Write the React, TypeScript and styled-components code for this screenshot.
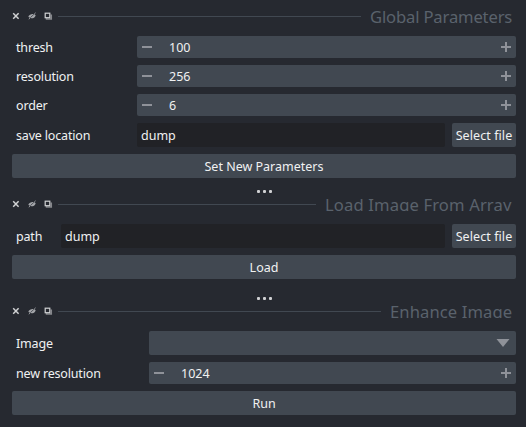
import React from 'react';
import styled, { createGlobalStyle } from 'styled-components';

const GlobalStyle = createGlobalStyle`
  * { box-sizing: border-box; }
  html, body { margin: 0; background: #262930; }
  body { overflow: hidden; }
`;

const Window = styled.div`
  width: 526px;
  height: 427px;
  padding: 9px 10px 0 12px;
  background: #262930;
  color: #f0f1f2;
  font: 12.5px/20px 'Noto Sans', sans-serif;
`;

const TitleBar = styled.header`
  display: flex;
  align-items: center;
  height: 14px;
  margin-bottom: 13px;
  overflow: hidden;
`;

const TitleIcons = styled.svg`
  flex: none;
  width: 46px;
  height: 14px;
`;

const Rule = styled.div`
  flex: 1;
  height: 1px;
  margin-top: 1px;
  background: #414851;
`;

const Title = styled.h2<{ $width: number; $tracking: number }>`
  flex: none;
  width: ${(p) => p.$width}px;
  margin: 0 4px 0 9px;
  height: 14px;
  padding-top: 1px;
  color: #5a626c;
  font-size: 16.6px;
  font-weight: 400;
  line-height: 14px;
  letter-spacing: ${(p) => p.$tracking}px;
  white-space: nowrap;
`;

const Form = styled.div`
  display: grid;
  gap: 7px;
`;

const Row = styled.div<{ $label: number }>`
  display: grid;
  grid-template-columns: ${(p) => p.$label}px 1fr;
  align-items: center;
`;

const Label = styled.label`
  padding: 2px 0 0 4px;
  letter-spacing: -0.17px;
  white-space: nowrap;
`;

const SpinBox = styled.div`
  display: flex;
  align-items: center;
  height: 22px;
  padding: 0 5px;
  border-radius: 2px;
  background: #414851;
`;

const SpinValue = styled.span`
  flex: 1;
  padding: 2px 0 0 17px;
`;

const StepIcon = styled.svg`
  width: 10px;
  height: 10px;
  fill: #8f9299;
`;

const FileField = styled.div`
  display: grid;
  grid-template-columns: 1fr 64px;
  gap: 7px;
`;

const LineEdit = styled.div`
  height: 24px;
  padding: 3px 4px 1px;
  border-radius: 2px;
  background: #212226;
`;

const Button = styled.button<{ $tracking?: number }>`
  height: 24px;
  padding: 2px 0 0;
  border: 0;
  border-radius: 2px;
  background: #414851;
  color: inherit;
  font: inherit;
  letter-spacing: ${(p) => p.$tracking ?? 0}px;
  white-space: nowrap;
`;

const Combo = styled.div`
  display: flex;
  align-items: center;
  justify-content: flex-end;
  height: 24px;
  padding-right: 6px;
  border-radius: 2px;
  background: #414851;
`;

const Arrow = styled.svg`
  width: 14px;
  height: 8px;
  fill: #8f9299;
`;

const Splitter = styled.div<{ $top: number; $bottom: number }>`
  display: flex;
  justify-content: center;
  gap: 3px;
  padding: ${(p) => p.$top}px 0 ${(p) => p.$bottom}px;
`;

const Dot = styled.i`
  width: 3px;
  height: 3px;
  border-radius: 1px;
  background: #d0d1d3;
`;

function Header({ title, width, tracking }: { title: string; width: number; tracking: number }) {
  return (
    <TitleBar>
      <TitleIcons viewBox="0 0 46 14">
        <path d="M1.2 4.3l5.4 5.4m0-5.4l-5.4 5.4" fill="none" stroke="#d1d2d4" strokeWidth="1.5" />
        <path d="M16.3 7.6C17.6 4.6 22 4 23.7 6.4C22.4 9.7 18.2 10.2 16.3 7.6Z" fill="#a3a5a9" />
        <path d="M18.2 8.8l3.8-3.6" stroke="#4a4d53" strokeWidth=".9" />
        <path d="M16.8 10.2l1.5-1.3M22.2 5.1l1.4-1.3" stroke="#a3a5a9" strokeWidth=".9" />
        <path d="M34.5 5.5v4.6h4.8V5.5" fill="none" stroke="#85878b" strokeWidth="1.5" />
        <rect x="33.2" y="4.2" width="4.6" height="4.5" fill="#262930" stroke="#d1d2d4" strokeWidth="1.2" />
      </TitleIcons>
      <Rule />
      <Title $width={width} $tracking={tracking}>{title}</Title>
    </TitleBar>
  );
}

function Spin({ value }: { value: number }) {
  return (
    <SpinBox>
      <StepIcon viewBox="0 0 10 10"><rect y="4" width="10" height="2" /></StepIcon>
      <SpinValue>{value}</SpinValue>
      <StepIcon viewBox="0 0 10 10"><path d="M4 0h2v4h4v2H6v4H4V6H0V4h4z" /></StepIcon>
    </SpinBox>
  );
}

function FilePicker({ value }: { value: string }) {
  return (
    <FileField>
      <LineEdit>{value}</LineEdit>
      <Button $tracking={0.08}>Select file</Button>
    </FileField>
  );
}

function Dots({ top, bottom }: { top: number; bottom: number }) {
  return <Splitter $top={top} $bottom={bottom}><Dot /><Dot /><Dot /></Splitter>;
}

export default function App() {
  return (
    <>
      <GlobalStyle />
      <Window>
        <Header title="Global Parameters" width={142} tracking={-0.15} />
        <Form>
          <Row $label={125}><Label>thresh</Label><Spin value={100} /></Row>
          <Row $label={125}><Label>resolution</Label><Spin value={256} /></Row>
          <Row $label={125}><Label>order</Label><Spin value={6} /></Row>
          <Row $label={125}><Label>save location</Label><FilePicker value="dump" /></Row>
          <Button>Set New Parameters</Button>
        </Form>
        <Dots top={12} bottom={4} />
        <Header title="Load Image From Array" width={187} tracking={0.14} />
        <Form>
          <Row $label={49}><Label>path</Label><FilePicker value="dump" /></Row>
          <Button>Load</Button>
        </Form>
        <Dots top={18} bottom={4} />
        <Header title="Enhance Image" width={122} tracking={0.1} />
        <Form>
          <Row $label={137}><Label>Image</Label><Combo><Arrow viewBox="0 0 14 8"><path d="M.5 0h13L7 8z" /></Arrow></Combo></Row>
          <Row $label={137}><Label>new resolution</Label><Spin value={1024} /></Row>
          <Button>Run</Button>
        </Form>
      </Window>
    </>
  );
}
